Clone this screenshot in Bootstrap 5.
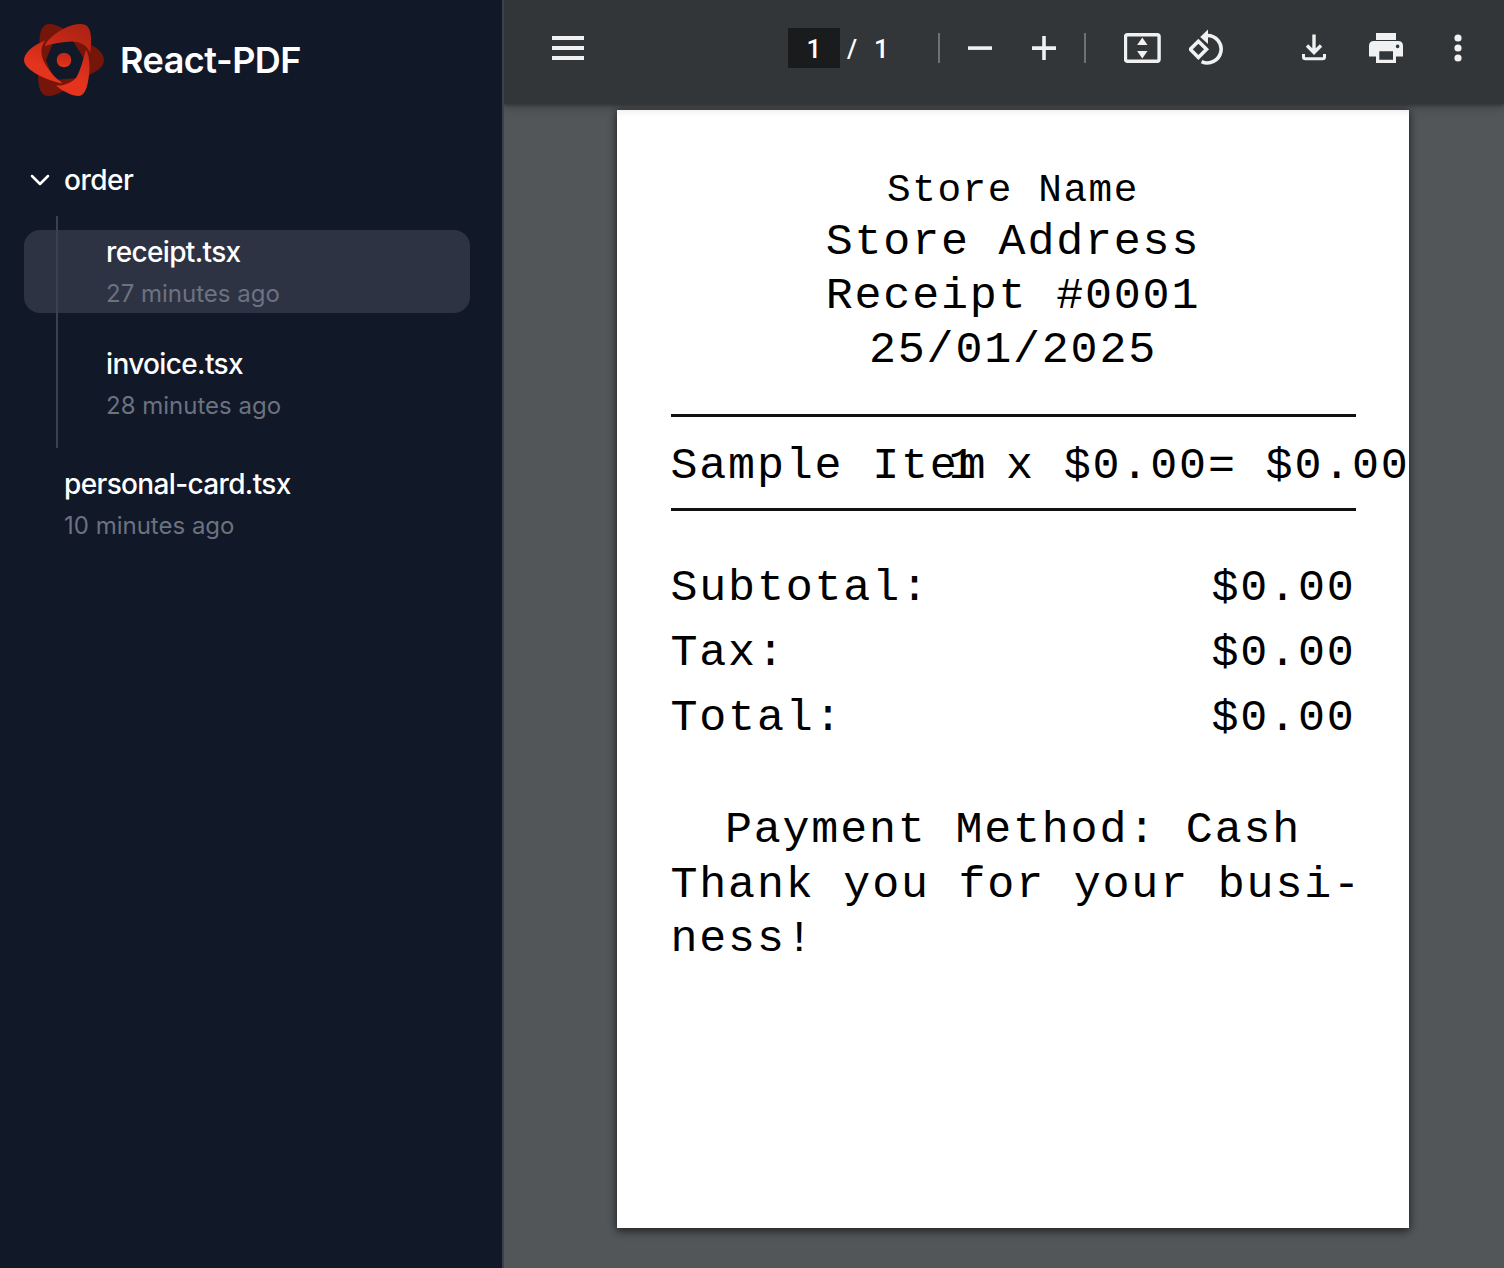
<!DOCTYPE html>
<html lang="en">
<head>
<meta charset="utf-8">
<meta name="viewport" content="width=device-width, initial-scale=1">
<title>React-PDF</title>
<link href="https://cdn.jsdelivr.net/npm/bootstrap@5.3.0/dist/css/bootstrap.min.css" rel="stylesheet">
<style>
  body { font-family: Inter, "Liberation Sans", sans-serif; background: #525659; }
  .sidebar { width: 504px; background: #111827; border-right: 2px solid #374151; padding: 24px 32px 0 24px; }
  .brand-title { font-size: 36px; font-weight: 600; line-height: 72px; letter-spacing: -.5px; }
  .brand-row { gap: 16px; height: 72px; }
  .tree { margin-top: 64px; }
  .folder-row { height: 40px; gap: 8px; font-size: 28px; font-weight: 500; letter-spacing: -.5px; }
  .branch { margin-top: 16px; height: 232px; padding-top: 14px; }
  .branch-line { left: 32px; top: 0; width: 2px; height: 232px; background: #374151; }
  .file-row { height: 83px; border-radius: 16px; padding-left: 82px; }
  .file-row + .file-row { margin-top: 29px; }
  .file-row.selected { background: #2e3344; }
  .root-file { margin-top: 14px; padding-left: 40px; }
  .file-name { font-size: 28px; font-weight: 500; line-height: 45px; letter-spacing: -.65px; }
  .file-time { font-size: 24px; line-height: 38px; color: #6b7280; }
  .toolbar { height: 104px; background: #323639; box-shadow: 0 1px 4px rgba(0,0,0,.4), 0 4px 10px rgba(0,0,0,.16); z-index: 2; }
  .tools { height: 96px; padding-left: 48px; }
  .tools svg { fill: #f1f1f1; flex-shrink: 0; }
  .page-text { font-size: 26px; font-family: Roboto, sans-serif; color: #fff; font-weight: 500; height: 40px; padding-top: 2px; }
  .page-box { width: 52px; background: #191b1c; margin-left: 204px; }
  .page-total { width: 98px; padding-left: 7px; }
  .slash { width: 27px; }
  .rule-v { width: 2px; height: 30px; background: #6f7274; }
  .zoom-group { gap: 40px; margin: 0 28px; }
  .view-group { gap: 28px; margin: 0 78px 0 38px; }
  .icon-print { margin: 0 51px 0 43px; }
  .paper { width: 792px; height: 1118px; margin: 6px 0 0 113px; background: #fff; color: #000; padding: 55.5px 53.5px 0; box-shadow: 0 4px 8px rgba(0,0,0,.4), 0 0 8px rgba(0,0,0,.4);
    font-family: "Liberation Mono", monospace; font-size: 45px; line-height: 54.4px; letter-spacing: 1.8px; }
  .store-name { font-size: 39.4px; line-height: 50px; letter-spacing: 1.56px; }
  .item-row { height: 97px; margin-top: 35px; padding-top: 23.5px; border-top: 3px solid #111; border-bottom: 3px solid #111; }
  .cell-name { width: 278px; flex-shrink: 0; }
  .cell-qty { width: 259.5px; flex-shrink: 0; }
  .totals { margin-top: 45.5px; line-height: 65px; }
  .closing { margin-top: 53px; }
</style>
</head>
<body class="vh-100 overflow-hidden">
<div class="d-flex vh-100">
  <aside class="sidebar flex-shrink-0 text-white">
    <div class="brand-row d-flex align-items-center">
      <svg width="80" height="72" viewBox="24 24 80 72">
        <defs>
          <linearGradient id="topPetal" x1=".9" y1="0" x2=".1" y2="1"><stop stop-color="#a82213"/><stop offset="1" stop-color="#d02c19"/></linearGradient>
          <linearGradient id="sidePetal" x1=".6" y1="0" x2=".3" y2="1"><stop stop-color="#c62a18"/><stop offset=".6" stop-color="#e5341d"/></linearGradient>
          <linearGradient id="core" x1="0" y1="0" x2="0" y2="1"><stop stop-color="#bd2716"/><stop offset="1" stop-color="#e5341d"/></linearGradient>
        </defs>
        <path fill="#76150a" d="M39.500 44C39 30 43 24 49 24C54 24 59 26 64 29L90 44C99 49 104 54 104 60C104 66 99 70 89 75L65 90C58 94 53 96 48 96C41 96 38 88 38 75Z"/>
        <path fill="#111827" d="M53 43L73 41L84 59L77 78L54 80L46 60Z"/>
        <path fill="url(#topPetal)" d="M45 46C45 42 56 32 66 27.500C73 24.500 77 24 81 24C90 24 91.500 33 91 43L90.300 53C87 45 80 41 70 41.500C60 42 52 44 45 46Z"/>
        <path fill="url(#sidePetal)" d="M45 40.500C31 46 24 54 24 60C24 68 39 78 62 83.500C61 81 58 80 55 77C48 69 42 61 41.500 53C41.200 47 43 44 45 40.500Z"/>
        <path fill="url(#sidePetal)" d="M86 50C88 53 89.500 59 89.500 67C89 82 86 96 79 96C72 96 62 91 56 85.500C62 86 70 84 76 78C81 70 83 59 86 50Z"/>
        <circle cx="64" cy="60" r="7.300" fill="url(#core)"/>
      </svg>
      <span class="brand-title">React-PDF</span>
    </div>
    <div class="tree">
      <div class="folder-row d-flex align-items-center">
        <svg width="32" height="32" viewBox="0 0 32 32" fill="none" stroke="#fff" stroke-width="2.500" stroke-linecap="round" stroke-linejoin="round"><path d="M8 12L16 20L24 12"/></svg>
        <span>order</span>
      </div>
      <div class="branch position-relative">
        <div class="file-row selected"><div class="file-name">receipt.tsx</div><div class="file-time">27 minutes ago</div></div>
        <div class="file-row"><div class="file-name">invoice.tsx</div><div class="file-time">28 minutes ago</div></div>
        <div class="branch-line position-absolute"></div>
      </div>
      <div class="root-file"><div class="file-name">personal-card.tsx</div><div class="file-time">10 minutes ago</div></div>
    </div>
  </aside>
  <main class="flex-grow-1 overflow-hidden">
    <header class="toolbar position-relative">
      <div class="tools d-flex align-items-center">
        <svg width="32" height="24"><path d="M0 0h32v4H0zM0 10h32v4H0zM0 20h32v4H0z"/></svg>
        <div class="page-box page-text d-flex align-items-center justify-content-center">1</div>
        <div class="page-total page-text d-flex align-items-center"><span class="slash">/</span><span>1</span></div>
        <div class="rule-v"></div>
        <div class="zoom-group d-flex">
          <svg width="24" height="24"><path d="M0 10.300h24v3.600H0z"/></svg>
          <svg width="24" height="24"><path d="M0 10.300h10.200V0h3.600v10.300H24v3.600H13.800V24h-3.600V13.900H0z"/></svg>
        </div>
        <div class="rule-v"></div>
        <div class="view-group d-flex align-items-center">
          <svg width="37" height="30" class="me-n1"><rect x="1.500" y="1.700" width="33.600" height="26.600" rx="2" fill="none" stroke="#f1f1f1" stroke-width="3.400"/><path d="M18.300 4.500L23.500 12H13.100zM18.300 25.500L23.500 18H13.100z"/></svg>
          <svg width="35" height="40" viewBox="1 0 35 40"><path d="M10.400 13.200L18.500 21.300L10.400 29.400L2.300 21.300Z" fill="none" stroke="#f1f1f1" stroke-width="3.600"/><path d="M19 7.500A13.700 13.700 0 1 1 13.600 33.600" fill="none" stroke="#f1f1f1" stroke-width="3.600"/><path d="M12.200 9L20 1.500V16Z"/></svg>
        </div>
        <svg width="24" height="28"><path d="M12 .5V18M5 11.500L12 18.500L19 11.500" fill="none" stroke="#f1f1f1" stroke-width="3.400"/><path d="M1.500 20V23Q1.500 24.700 3.500 24.700H20.500Q22.500 24.700 22.500 23V20" fill="none" stroke="#f1f1f1" stroke-width="3"/></svg>
        <svg class="icon-print" width="34" height="30"><path fill-rule="evenodd" d="M7 0H27V7H7ZM5 8H29Q34 8 34 13V23.500H27V30H7V23.500H0V13Q0 8 5 8ZM10.300 18.300V26.700H24V18.300ZM28.600 11.600a1.800 1.800 0 1 0 .01 0z"/></svg>
        <svg width="8" height="28"><circle cx="4" cy="4" r="3.600"/><circle cx="4" cy="14" r="3.600"/><circle cx="4" cy="24" r="3.600"/></svg>
      </div>
    </header>
    <article class="paper text-nowrap">
      <div class="text-center">
        <div class="store-name">Store Name</div>
        <div>Store Address</div>
        <div>Receipt #0001</div>
        <div>25/01/2025</div>
      </div>
      <div class="item-row d-flex">
        <div class="cell-name">Sample Item</div>
        <div class="cell-qty">1 x $0.00</div>
        <div>= $0.00</div>
      </div>
      <div class="totals">
        <div class="d-flex justify-content-between"><span>Subtotal:</span><span>$0.00</span></div>
        <div class="d-flex justify-content-between"><span>Tax:</span><span>$0.00</span></div>
        <div class="d-flex justify-content-between"><span>Total:</span><span>$0.00</span></div>
      </div>
      <div class="closing">
        <div class="text-center">Payment Method: Cash</div>
        <div>Thank you for your busi-<br>ness!</div>
      </div>
    </article>
  </main>
</div>
<script src="https://cdn.jsdelivr.net/npm/bootstrap@5.3.0/dist/js/bootstrap.bundle.min.js"></script>
</body>
</html>
